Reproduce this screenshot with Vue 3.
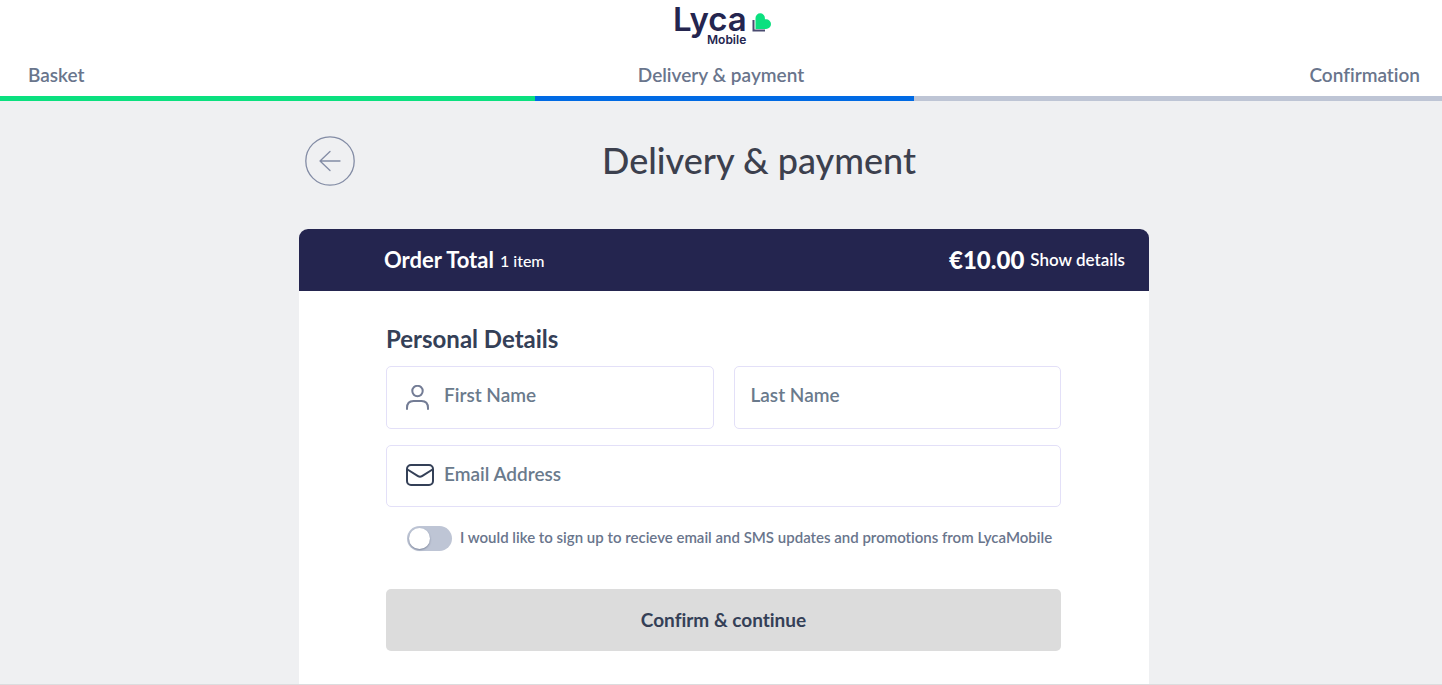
<script setup>
import { ref } from 'vue'

const steps = [
  { label: 'Basket', state: 'done' },
  { label: 'Delivery & payment', state: 'current' },
  { label: 'Confirmation', state: 'upcoming' },
]
const firstName = ref('')
const lastName = ref('')
const email = ref('')
const optIn = ref(false)
</script>

<template>
  <div class="page">
    <header class="header">
      <a class="logo" href="#" aria-label="Lyca Mobile">
        <svg width="100" height="47" viewBox="0 0 100 47">
          <text class="logo-main" x="2" y="31">Lyca</text>
          <text class="logo-sub" x="36" y="44">Mobile</text>
          <path d="M82.500 20v10.500H94" fill="none" stroke="#4a4b70" stroke-width="2" />
          <path d="M84.500 29V18a4.700 4.700 0 0 1 9.400 0v1.200h1.200a4.900 4.900 0 0 1 0 9.800z" fill="#0be07f" />
        </svg>
      </a>
      <ol class="steps">
        <li v-for="s in steps" :key="s.label">{{ s.label }}</li>
      </ol>
      <div class="progress">
        <span v-for="s in steps" :key="s.label" :class="s.state"></span>
      </div>
    </header>

    <main class="main">
      <div class="content">
        <div class="title-row">
          <button class="back" type="button" aria-label="Back">
            <svg width="50" height="50" viewBox="0 0 50 50" fill="none" stroke="#838ca5" stroke-width="1.300" stroke-linecap="round" stroke-linejoin="round">
              <circle cx="25" cy="25" r="24.200" />
              <path d="M35 25H15M25 15.500L15 25l10 9.500" />
            </svg>
          </button>
          <h1>Delivery &amp; payment</h1>
        </div>

        <section class="card">
          <div class="summary">
            <div class="summary-part">
              <strong class="total">Order Total</strong>
              <span class="count">1 item</span>
            </div>
            <div class="summary-part">
              <strong class="price">€10.00</strong>
              <button class="details" type="button">Show details</button>
            </div>
          </div>

          <form class="form" @submit.prevent>
            <h2>Personal Details</h2>
            <div class="names">
              <label class="field">
                <svg width="24" height="26" viewBox="0 0 24 26" fill="none" stroke="#737c95" stroke-width="2" stroke-linecap="round">
                  <circle cx="11.500" cy="6" r="5.200" />
                  <path d="M1 24v-1Q1 16 7.500 16h8Q22 16 22 23v1" />
                </svg>
                <input v-model="firstName" class="with-icon" type="text" placeholder="First Name" aria-label="First Name" />
              </label>
              <label class="field">
                <input v-model="lastName" type="text" placeholder="Last Name" aria-label="Last Name" />
              </label>
            </div>
            <label class="field">
              <svg width="28" height="24" viewBox="0 0 28 24" fill="none" stroke="#344057" stroke-width="2" stroke-linecap="round" stroke-linejoin="round">
                <rect x="1" y="1" width="26" height="20" rx="4" />
                <path d="M1.500 5.500l10.500 6.700q2 1.300 4 0L26.500 5.500" />
              </svg>
              <input v-model="email" class="with-icon email" type="email" placeholder="Email Address" aria-label="Email Address" />
            </label>
            <label class="opt-in">
              <input v-model="optIn" type="checkbox" role="switch" />
              <span>I would like to sign up to recieve email and SMS updates and promotions from LycaMobile</span>
            </label>
            <button class="confirm" type="submit">Confirm &amp; continue</button>
          </form>
        </section>
      </div>
    </main>
  </div>
</template>

<style>
body {
  margin: 0;
}
</style>

<style scoped>
.page {
  box-sizing: border-box;
  min-height: 100vh;
  display: flex;
  flex-direction: column;
  background: #eff0f2;
  border-bottom: 1px solid #dcdcde;
  font-family: Lato, "Liberation Sans", sans-serif;
  font-weight: 500;
  font-variant-ligatures: none;
  color: #344057;
}
.page *,
.page *::before {
  box-sizing: border-box;
}
button,
input {
  font: inherit;
  font-variant-ligatures: none;
  color: inherit;
}
.header {
  background: #fff;
}
.logo {
  display: block;
  width: 100px;
  margin: 0 auto;
}
.logo svg {
  display: block;
}
.logo-main,
.logo-sub {
  font-family: Inter, "Liberation Sans", sans-serif;
  font-weight: 600;
  fill: #24254f;
}
.logo-main {
  font-size: 33px;
}
.logo-sub {
  font-size: 12px;
}
.steps {
  display: grid;
  grid-template-columns: 1fr auto 1fr;
  margin: 0;
  padding: 16px 22px 9px;
  list-style: none;
  font-size: 19px;
  line-height: 24px;
  font-weight: 600;
  color: #69758c;
}
.steps li:first-child {
  padding-left: 6px;
}
.steps li:last-child {
  text-align: right;
}
.progress {
  display: flex;
  height: 5px;
}
.done {
  flex: 535;
  background: #0be07f;
}
.current {
  flex: 379;
  background: #006ae4;
}
.upcoming {
  flex: 528;
  background: #bec5d5;
}
.main {
  flex: 1;
  display: flex;
  justify-content: center;
  padding-left: 6px;
}
.content {
  flex: 0 1 850px;
  display: flex;
  flex-direction: column;
}
.title-row {
  display: flex;
  align-items: center;
  padding: 35px 0 43px 6px;
}
.back {
  width: 50px;
  height: 50px;
  padding: 0;
  border: 0;
  border-radius: 50%;
  background: none;
}
.back svg {
  display: block;
}
h1 {
  flex: 1;
  margin: 0;
  padding: 0 0 2px 14px;
  text-align: center;
  font-size: 36px;
  line-height: 48px;
  font-weight: 500;
  color: #3c404e;
}
.card {
  flex: 1;
  background: #fff;
  border-radius: 9px 9px 0 0;
}
.summary {
  display: flex;
  justify-content: space-between;
  align-items: center;
  height: 62px;
  padding: 0 24px 2px 85px;
  border-radius: 9px 9px 0 0;
  background: #24254f;
  color: #fff;
}
.summary-part {
  display: flex;
  align-items: center;
  gap: 6px;
}
.total {
  font-size: 22px;
  font-weight: 700;
}
.count {
  padding-top: 2px;
  font-size: 16px;
}
.price {
  font-size: 24px;
  font-weight: 900;
}
.details {
  padding: 0;
  border: 0;
  background: none;
  font-size: 17px;
  font-weight: 600;
}
.form {
  padding: 32px 88px 33px 87px;
}
h2 {
  margin: 0 0 11px;
  font-size: 24px;
  line-height: 32px;
  font-weight: 700;
}
.names {
  display: grid;
  grid-template-columns: 1fr 1fr;
  gap: 20px;
  margin-bottom: 16px;
}
.field {
  display: block;
  position: relative;
}
.field svg {
  position: absolute;
  left: 20px;
  top: 50%;
  transform: translateY(-50%);
}
.field input {
  display: block;
  width: 100%;
  height: 63px;
  padding: 0 16px 6px;
  border: 1px solid #e3e0f8;
  border-radius: 5px;
  background: #fff;
  font-size: 19px;
  font-weight: 600;
}
.field .with-icon {
  padding-left: 57px;
}
.field .email {
  height: 62px;
}
.field input::placeholder {
  color: #6a7a8c;
  opacity: 1;
}
.opt-in {
  display: flex;
  align-items: center;
  gap: 8px;
  margin: 19px 0 38px 21px;
  font-size: 15px;
  line-height: 20px;
  font-weight: 600;
  color: #69758c;
}
.opt-in span {
  padding-bottom: 4px;
}
.opt-in input {
  flex: none;
  appearance: none;
  width: 45px;
  height: 25px;
  margin: 0;
  padding: 2px;
  border-radius: 13px;
  background: #bec5d5;
}
.opt-in input::before {
  content: "";
  display: block;
  width: 21px;
  height: 21px;
  border-radius: 50%;
  background: #fff;
  box-shadow: 0 1px 2px #7c859b;
}
.opt-in input:checked {
  background: #0be07f;
}
.opt-in input:checked::before {
  margin-left: auto;
}
.confirm {
  display: block;
  width: 100%;
  height: 62px;
  padding: 0 0 2px;
  border: 0;
  border-radius: 5px;
  background: #dcdcdc;
  font-size: 19px;
  font-weight: 700;
}
</style>
